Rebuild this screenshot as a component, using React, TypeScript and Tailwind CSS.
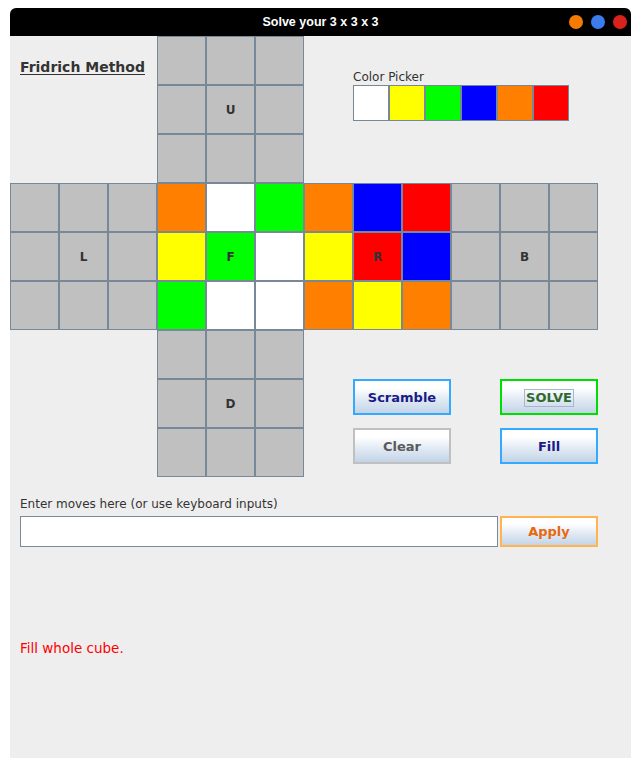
import React from 'react'

type Sticker = 'x' | 'o' | 'w' | 'g' | 'y' | 'b' | 'r'

const STICKER_BG: Record<Sticker, string> = {
  x: 'bg-[#c0c0c0]',
  o: 'bg-[#ff8000]',
  w: 'bg-white',
  g: 'bg-[#00ff00]',
  y: 'bg-[#ffff00]',
  b: 'bg-[#0000ff]',
  r: 'bg-[#ff0000]',
}

const blank: Sticker[] = ['x', 'x', 'x', 'x', 'x', 'x', 'x', 'x', 'x']

const faces: { label: string; cells: Sticker[]; pos: string }[] = [
  { label: 'U', cells: blank, pos: 'col-start-2 row-start-1' },
  { label: 'L', cells: blank, pos: 'col-start-1 row-start-2' },
  { label: 'F', cells: ['o', 'w', 'g', 'y', 'g', 'w', 'g', 'w', 'w'], pos: 'col-start-2 row-start-2' },
  { label: 'R', cells: ['o', 'b', 'r', 'y', 'r', 'b', 'o', 'y', 'o'], pos: 'col-start-3 row-start-2' },
  { label: 'B', cells: blank, pos: 'col-start-4 row-start-2' },
  { label: 'D', cells: blank, pos: 'col-start-2 row-start-3' },
]

const pickerColors: Sticker[] = ['w', 'y', 'g', 'b', 'o', 'r']

const btnFace = 'bg-[linear-gradient(to_bottom,#ffffff_0%,#ffffff_22%,#e3ebf4_55%,#c3d4e7_100%)]'

function Face({ label, cells, pos }: { label: string; cells: Sticker[]; pos: string }) {
  return (
    <div className={`${pos} grid grid-cols-3 grid-rows-3 w-[147px] h-[147px]`}>
      {cells.map((c, i) => (
        <div
          key={i}
          className={`${STICKER_BG[c]} border border-[#778899] flex items-center justify-center text-[12px] font-bold text-[#333333]`}
        >
          {i === 4 ? label : ''}
        </div>
      ))}
    </div>
  )
}

export default function App() {
  return (
    <div className="min-h-screen bg-white pt-2 pl-[10px] font-['DejaVu_Sans',sans-serif]">
      <div className="w-[621px]">
        {/* Title bar */}
        <div className="relative h-[28px] bg-black rounded-t-[6px] flex items-center justify-center">
          <span className="text-white text-[12.5px] font-bold font-['Liberation_Sans',sans-serif]">Solve your 3 x 3 x 3</span>
          <div className="absolute right-[4px] top-[7px] flex gap-[8px]">
            <span className="w-[14px] h-[14px] rounded-full bg-[#f57c00]" />
            <span className="w-[14px] h-[14px] rounded-full bg-[#3b7ded]" />
            <span className="w-[14px] h-[14px] rounded-full bg-[#d8221b]" />
          </div>
        </div>

        {/* Content */}
        <div className="h-[722px] bg-[#eeeeee]">
          <div className="grid grid-cols-[repeat(4,147px)] grid-rows-[repeat(3,147px)]">
            <div className="col-start-1 row-start-1 pl-[10px] pt-[19px]">
              <span className="text-[14px] leading-[20px] font-bold text-[#333333] underline underline-offset-2">Fridrich Method</span>
            </div>

            {faces.map((f) => (
              <Face key={f.label} {...f} />
            ))}

            {/* Color picker */}
            <div className="col-start-3 col-span-2 row-start-1 pl-[49px] pt-[34px]">
              <div className="text-[12px] leading-[14px] text-[#333333]">Color Picker</div>
              <div className="mt-[1px] flex">
                {pickerColors.map((c) => (
                  <div key={c} className={`${STICKER_BG[c]} w-[36px] h-[36px] border border-[#778899]`} />
                ))}
              </div>
            </div>

            {/* Buttons */}
            <div className="col-start-3 col-span-2 row-start-3 pl-[49px] pt-[49px]">
              <div className="grid grid-cols-[98px_98px] gap-x-[49px] gap-y-[13px]">
                <button className={`h-[36px] pt-[1px] border-2 border-[#33aaff] ${btnFace} text-[13px] font-bold text-[#1a1a88]`}>Scramble</button>
                <button className={`h-[36px] pt-[1px] border-2 border-[#00dd00] ${btnFace} flex items-center justify-center`}>
                  <span className="border border-[#a3b8cc] px-[1px] leading-[16px] text-[13px] font-bold text-[#2f6a2f]">SOLVE</span>
                </button>
                <button className={`h-[36px] pt-[1px] border-2 border-[#c0c0c0] ${btnFace} text-[13px] font-bold text-[#5a5a5a]`}>Clear</button>
                <button className={`h-[36px] pt-[1px] border-2 border-[#33aaff] ${btnFace} text-[13px] font-bold text-[#1a1a88]`}>Fill</button>
              </div>
            </div>
          </div>

          {/* Moves input */}
          <div className="pl-[10px]">
            <div className="mt-[20px] text-[12px] leading-[14px] text-[#333333]">Enter moves here (or use keyboard inputs)</div>
            <div className="mt-[5px] flex gap-[2px]">
              <input className="w-[478px] h-[31px] bg-white border border-[#7a8a99] outline-none px-1 text-[12px]" />
              <button className={`w-[98px] h-[31px] pt-[1px] border-2 border-[#ffb450] ${btnFace} text-[13px] font-bold text-[#e8680f]`}>Apply</button>
            </div>
            <div className="mt-[93px] text-[13.5px] leading-[16px] text-[#ff0000]">Fill whole cube.</div>
          </div>
        </div>
      </div>
    </div>
  )
}
